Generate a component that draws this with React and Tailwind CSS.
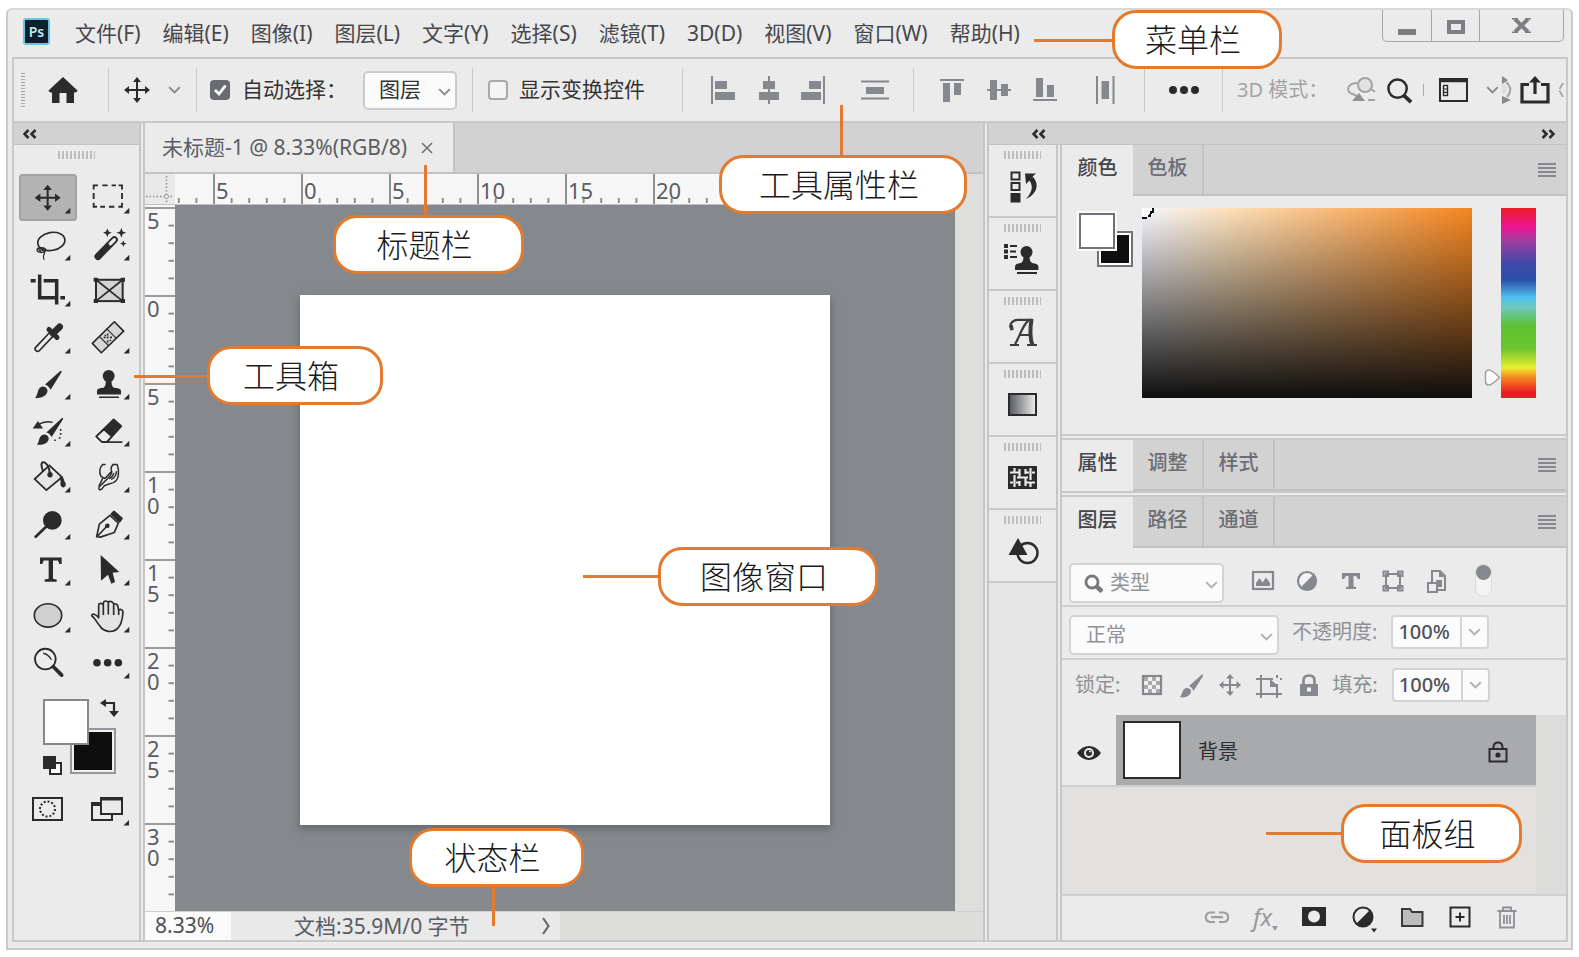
import React from "react";

const INK = "#2b2b2d";
const GREY = "#85888d";

/* ---------- shared pieces ---------- */

function Grip({ vertical }) {
  const marks = Array.from({ length: vertical ? 12 : 10 });
  return vertical ? (
    <span className="flex flex-col gap-[2px]" aria-hidden="true">
      {marks.map((_, i) => (
        <span key={i} className="h-px w-[4px] bg-[#a5a5a5]" />
      ))}
    </span>
  ) : (
    <span className="flex h-[8px] gap-[2px]" aria-hidden="true">
      {marks.map((_, i) => (
        <span key={i} className="w-[2px] bg-[#bdbdbd] last:w-px" />
      ))}
    </span>
  );
}

function Chevron({ color = "#8a8a8a", className = "" }) {
  return (
    <svg width="13" height="8" viewBox="0 0 14 9" className={className} aria-hidden="true">
      <path d="M1 1.2 L7 7.2 L13 1.2" fill="none" stroke={color} strokeWidth="2.2" />
    </svg>
  );
}

function DoubleChevron({ right }) {
  return (
    <svg width="14" height="10" viewBox="0 0 14 10" aria-hidden="true">
      <path
        d={right ? "M1.5 1 L5.5 5 L1.5 9 M8.5 1 L12.5 5 L8.5 9" : "M5.5 1 L1.5 5 L5.5 9 M12.5 1 L8.5 5 L12.5 9"}
        fill="none"
        stroke={INK}
        strokeWidth="2.6"
      />
    </svg>
  );
}

function MoveGlyph({ size = 26, color = INK }) {
  return (
    <svg width={size} height={size} viewBox="0 0 26 26" fill={color} aria-hidden="true">
      <path d="M13 0 L17 5 H14 V12 H21 V9 L26 13 L21 17 V14 H14 V21 H17 L13 26 L9 21 H12 V14 H5 V17 L0 13 L5 9 V12 H12 V5 H9 Z" />
    </svg>
  );
}

/* ---------- menu bar ---------- */

const MENUS = ["文件(F)", "编辑(E)", "图像(I)", "图层(L)", "文字(Y)", "选择(S)", "滤镜(T)", "3D(D)", "视图(V)", "窗口(W)", "帮助(H)"];

function MenuBar() {
  return (
    <header className="flex h-[47px] shrink-0 items-start pr-[4px] pl-[11px]">
      <div className="mt-[8px] flex size-[27px] items-center justify-center rounded-[3px] border-2 border-[#6cc3e4] bg-[#10202a] text-[14px] leading-none font-semibold text-[#bfe6f5]">
        Ps
      </div>
      <nav className="mt-[8px] ml-[25px] flex gap-[22px]">
        {MENUS.map((m) => (
          <button key={m} type="button" className="text-[21px] leading-[30px] whitespace-nowrap text-[#47474b]">
            {m}
          </button>
        ))}
      </nav>
      <div className="ml-auto flex h-[32px] rounded-b-[5px] border border-t-0 border-[#a6a6a8]">
        <button type="button" aria-label="最小化" className="flex w-[49px] items-center justify-center border-r border-[#a6a6a8] pt-[12px]">
          <span className="h-[6px] w-[18px] bg-[#7b7e83]" />
        </button>
        <button type="button" aria-label="最大化" className="flex w-[48px] items-center justify-center border-r border-[#a6a6a8] pt-[2px]">
          <span className="h-[14px] w-[18px] border-[4px] border-[#7b7e83]" />
        </button>
        <button type="button" aria-label="关闭" className="flex w-[83px] items-center justify-center">
          <svg width="19" height="15" viewBox="0 0 19 15" aria-hidden="true">
            <path d="M3 1 L16 14 M16 1 L3 14" stroke="#7b7e83" strokeWidth="4" />
            <path d="M0 .8 H6 M13 .8 H19 M0 14.2 H6 M13 14.2 H19" stroke="#7b7e83" strokeWidth="1.6" />
          </svg>
        </button>
      </div>
    </header>
  );
}

/* ---------- options bar ---------- */

const ALIGN = {
  left: (
    <>
      <path d="M1 0 V28" stroke={GREY} strokeWidth="2" />
      <path d="M4 5 H16 V13 H4 Z M4 16 H24 V24 H4 Z" fill={GREY} />
    </>
  ),
  center: (
    <>
      <path d="M12 0 V28" stroke={GREY} strokeWidth="2" />
      <path d="M6 5 H18 V13 H6 Z M2 16 H22 V24 H2 Z" fill={GREY} />
    </>
  ),
  right: (
    <>
      <path d="M23 0 V28" stroke={GREY} strokeWidth="2" />
      <path d="M8 5 H20 V13 H8 Z M0 16 H20 V24 H0 Z" fill={GREY} />
    </>
  ),
  distV: (
    <>
      <path d="M-2 5.5 H26 M-2 22.500 H26" stroke={GREY} strokeWidth="2" />
      <path d="M3 11 H21 V18 H3 Z" fill={GREY} />
    </>
  ),
  top: (
    <>
      <path d="M0 4 H24" stroke={GREY} strokeWidth="2" />
      <path d="M3 7 H10 V26 H3 Z M14 7 H21 V19 H14 Z" fill={GREY} />
    </>
  ),
  middle: (
    <>
      <path d="M0 14 H24" stroke={GREY} strokeWidth="2" />
      <path d="M3 4 H10 V24 H3 Z M14 8 H21 V20 H14 Z" fill={GREY} />
    </>
  ),
  bottom: (
    <>
      <path d="M0 24 H24" stroke={GREY} strokeWidth="2" />
      <path d="M3 2 H10 V21 H3 Z M14 9 H21 V21 H14 Z" fill={GREY} />
    </>
  ),
  distH: (
    <>
      <path d="M4 0 V28 M20.500 0 V28" stroke={GREY} strokeWidth="2" />
      <path d="M8.500 5 H16 V23 H8.500 Z" fill={GREY} />
    </>
  ),
};

function AlignButton({ name, label, className }) {
  return (
    <button type="button" aria-label={label} className={`flex shrink-0 justify-center ${className}`}>
      <svg width="24" height="28" viewBox="0 0 24 28" className="overflow-visible" aria-hidden="true">
        {ALIGN[name]}
      </svg>
    </button>
  );
}

function Divider() {
  return <span className="h-[44px] w-px shrink-0 bg-[#cacaca]" />;
}

function OptionsBar() {
  return (
    <div className="flex h-[64px] shrink-0 items-center overflow-hidden border-b-2 border-[#c9c9c9] pl-[7px] whitespace-nowrap text-[21px] text-[#333]">
      <Grip vertical />
      <button type="button" aria-label="主页" className="ml-[23px]">
        <svg width="30" height="28" viewBox="0 0 30 28" fill={INK} aria-hidden="true">
          <path d="M15 1 L29.500 14.500 Q29 17 26 16.500 V27 H18.500 V17 H11.500 V27 H4 V16.500 Q1 17 .5 14.500 Z" />
        </svg>
      </button>
      <span className="w-[30px] shrink-0" />
      <Divider />
      <button type="button" aria-label="移动工具" className="ml-[15px] flex items-center gap-[18px]">
        <MoveGlyph />
        <Chevron />
      </button>
      <span className="w-[15px] shrink-0" />
      <Divider />
      <label className="ml-[13px] flex items-center gap-[12px]">
        <span className="grid">
          <input type="checkbox" defaultChecked className="col-start-1 row-start-1 size-[20px] appearance-none rounded-[4px] bg-[#696c73]" />
          <svg viewBox="0 0 20 20" className="pointer-events-none col-start-1 row-start-1 size-[20px]" aria-hidden="true">
            <path d="M5 10 L9 14 L15.500 5.500" fill="none" stroke="#fff" strokeWidth="2.800" />
          </svg>
        </span>
        <span>自动选择：</span>
      </label>
      <span className="relative ml-[16px] block">
        <select aria-label="自动选择" className="h-[39px] w-[94px] appearance-none rounded-[5px] border-2 border-[#cbcbcb] bg-[#fbfbfb] pl-[14px] text-[21px]">
          <option>图层</option>
          <option>组</option>
        </select>
        <Chevron className="pointer-events-none absolute top-[17px] right-[6px]" />
      </span>
      <span className="w-[15px] shrink-0" />
      <Divider />
      <label className="ml-[15px] flex items-center gap-[11px]">
        <input type="checkbox" className="size-[20px] appearance-none rounded-[4px] border-2 border-[#a9a9a9] bg-[#f4f4f4]" />
        <span>显示变换控件</span>
      </label>
      <span className="w-[37px] shrink-0" />
      <Divider />
      <AlignButton name="left" label="左对齐" className="ml-[16px] w-[47px]" />
      <AlignButton name="center" label="水平居中对齐" className="w-[46px]" />
      <AlignButton name="right" label="右对齐" className="w-[42px]" />
      <AlignButton name="distV" label="垂直分布" className="ml-[16px] w-[50px]" />
      <span className="w-[13px] shrink-0" />
      <Divider />
      <AlignButton name="top" label="顶对齐" className="ml-[14px] w-[47px]" />
      <AlignButton name="middle" label="垂直居中对齐" className="w-[47px]" />
      <AlignButton name="bottom" label="底对齐" className="w-[46px]" />
      <AlignButton name="distH" label="水平分布" className="ml-[13px] w-[48px]" />
      <span className="w-[15px] shrink-0" />
      <Divider />
      <button type="button" aria-label="更多选项" className="flex w-[77px] shrink-0 justify-center">
        <svg width="30" height="8" viewBox="0 0 30 8" fill={INK} aria-hidden="true">
          <circle cx="4" cy="4" r="4" />
          <circle cx="15" cy="4" r="4" />
          <circle cx="26" cy="4" r="4" />
        </svg>
      </button>
      <Divider />
      <span className="ml-[14px] text-[20px] text-[#a3a3a5]">3D 模式：</span>
      <div className="ml-auto flex shrink-0 items-center">
        <button type="button" aria-label="环绕移动 3D 相机">
          <svg width="29" height="26" viewBox="0 0 29 26" fill="none" stroke="#a2a4a8" strokeWidth="2" aria-hidden="true">
            <circle cx="18" cy="8" r="7" fill="#e2e2e2" />
            <path d="M10 6 C2 6 -1 12 3 16 L10 19 M24 12 L28 15 M21 23 H28" />
            <path d="M5 24 L12 16 L18 24 Z" fill="#8d9095" stroke="none" />
          </svg>
        </button>
        <button type="button" aria-label="搜索" className="ml-[10px]">
          <svg width="27" height="27" viewBox="0 0 28 27" fill="none" stroke={INK} aria-hidden="true">
            <circle cx="12" cy="11.500" r="9.500" strokeWidth="2.600" />
            <path d="M18.500 18.500 L26 25.500" strokeWidth="4" />
          </svg>
        </button>
        <span className="ml-[10px] h-[12px] w-px bg-[#aaa]" />
        <button type="button" aria-label="选择工作区" className="ml-[15px] flex items-center gap-[18px]">
          <svg width="29" height="24" viewBox="0 0 29 24" fill="none" stroke={INK} aria-hidden="true">
            <rect x="1" y="1" width="27" height="22" strokeWidth="2" />
            <path d="M0 2.500 H29" strokeWidth="3.500" />
            <rect x="4.500" y="7.500" width="4" height="10" strokeWidth="1.400" />
            <path d="M4.500 11 H8.500 M4.500 14.300 H8.500" strokeWidth="1.200" />
          </svg>
          <Chevron />
        </button>
        <svg width="10" height="28" viewBox="0 0 10 28" className="ml-[3px]" aria-hidden="true">
          <path d="M0 0 L6 4 L0 8 Z M0 20 L9 24 L0 28 Z" fill="#85888d" />
          <path d="M0 8 H3 Q6 13 3 18 H0 Z" fill="#dedede" />
          <path d="M4 6 Q12 13 5 21" fill="none" stroke="#a2a4a8" strokeWidth="2" />
        </svg>
        <button type="button" aria-label="共享" className="ml-[8px]">
          <svg width="30" height="28" viewBox="0 0 30 28" fill="none" stroke={INK} strokeWidth="3.200" aria-hidden="true">
            <path d="M9 8.500 H2 V26 H28 V8.500 H21 M15 18 V5" />
            <path d="M15 0 L21 6.500 H9 Z" fill={INK} stroke="none" />
          </svg>
        </button>
        <svg width="6" height="16" viewBox="0 0 6 16" className="mr-[2px] ml-[8px]" aria-hidden="true">
          <path d="M5 1 L1 8 L5 15" fill="none" stroke="#a2a4a8" strokeWidth="1.800" strokeDasharray="7 2" />
        </svg>
      </div>
    </div>
  );
}

/* ---------- toolbox ---------- */

const TOOLS = [
  {
    name: "移动工具",
    art: (
      <path fill={INK} d="M86 32 L99 48 H89 V68 H108 V58 L125 71 L108 84 V74 H89 V94 H99 L86 110 L73 94 H83 V74 H64 V84 L47 71 L64 58 V68 H83 V48 H73 Z" />
    ),
  },
  {
    name: "矩形选框工具",
    art: <path fill="none" stroke={INK} strokeWidth="5.500" d="M44 46 V34 H57 M70 34 H86 M98 34 H111 M119 34 H129 V46 M129 57 V75 M129 86 V98 H118 M106 98 H90 M78 98 H64 M54 98 H44 V86 M44 75 V57" />,
  },
  {
    name: "套索工具",
    art: (
      <g fill="none" stroke={INK} strokeWidth="5">
        <ellipse cx="97" cy="61" rx="41" ry="27" transform="rotate(-10 97 61)" />
        <ellipse cx="67" cy="87" rx="13" ry="7" strokeWidth="4" />
        <path d="M60 90 C66 80 82 92 74 102 Q72 110 76 116 M56 80 L68 96" strokeWidth="3.500" />
      </g>
    ),
  },
  {
    name: "魔棒工具",
    art: (
      <g>
        <path d="M57 106 L106 56" stroke={INK} strokeWidth="21" strokeLinecap="round" />
        <path d="M94 68 L106 56" stroke="#ebebeb" strokeWidth="10" strokeLinecap="round" />
        <path fill={INK} d="M85 22 l4 9 9 4 -9 4 -4 9 -4 -9 -9 -4 9 -4z M127 20 l4 11 11 4 -11 4 -4 11 -4 -11 -11 -4 11 -4z M133 58 l3 7 7 2 -7 3 -3 7 -3 -7 -7 -3 7 -2z" />
      </g>
    ),
  },
  {
    name: "裁剪工具",
    art: <path fill="none" stroke={INK} strokeWidth="10.500" d="M62 22 V92 H112 M35 41 H50 M74 41 H113 V112 M124 92 H138" />,
  },
  {
    name: "图框工具",
    plain: true,
    art: (
      <g stroke={INK} fill="none">
        <rect x="51" y="38" width="80" height="64" fill="#d4d4d4" strokeWidth="6" />
        <path d="M51 38 L131 102 M131 38 L51 102" strokeWidth="5" />
        <path d="M44 32 h13 v12 h-13z M125 32 h13 v12 h-13z M44 96 h13 v12 h-13z M125 96 h13 v12 h-13z" fill={INK} stroke="none" />
      </g>
    ),
  },
  {
    name: "吸管工具",
    art: (
      <g>
        <path d="M56 104 L94 64" stroke={INK} strokeWidth="20" strokeLinecap="round" />
        <path d="M56 104 L94 64" stroke="#ebebeb" strokeWidth="10" strokeLinecap="round" />
        <path d="M102 58 L122 38" stroke={INK} strokeWidth="20" strokeLinecap="round" />
        <path d="M90 46 L114 70" stroke={INK} strokeWidth="15" strokeLinecap="round" />
      </g>
    ),
  },
  {
    name: "污点修复画笔工具",
    art: (
      <g stroke={INK} fill="none" strokeLinejoin="round">
        <path d="M106 23 L134 51 L67 116 L40 88 Z" fill="#d8d8d8" strokeWidth="5" />
        <path d="M84 45 L112 73 M61 67 L89 95" strokeWidth="3.500" />
        <path d="M86 58 v6 M74 70 h6 M86 67 v6 M93 70 h6 M86 79 v6 M79 62 v4 M94 77 v4" strokeWidth="5" />
      </g>
    ),
  },
  {
    name: "画笔工具",
    art: (
      <g fill={INK}>
        <path d="M48 114 C58 104 54 82 70 79 C82 78 89 90 84 99 C77 112 60 115 48 114 Z" />
        <path d="M78 73 L124 33 Q130 29 127 37 L95 89 Q88 76 78 73 Z" />
      </g>
    ),
  },
  {
    name: "仿制图章工具",
    art: (
      <g fill={INK}>
        <circle cx="89" cy="48" r="18" />
        <path d="M80 60 H98 Q96 76 104 83 Q126 84 126 92 V103 H54 V92 Q54 84 74 83 Q82 76 80 60 Z M60 109 H120 V114 H60 Z" />
      </g>
    ),
  },
  {
    name: "历史记录画笔工具",
    art: (
      <g fill={INK}>
        <path d="M54 113 C62 104 58 86 74 82 C86 81 92 92 88 100 C81 112 64 114 54 113 Z" />
        <path d="M82 76 L127 34 Q135 29 131 38 L98 90 Q92 78 82 76 Z" />
        <path d="M41 64 L57 42 L72 64 Z" />
        <path d="M58 52 Q80 40 101 46" fill="none" stroke={INK} strokeWidth="4" />
        <path d="M125 66 v5 M125 78 v5 M122 90 v5 M108 97 v5" stroke={INK} strokeWidth="5" />
      </g>
    ),
  },
  {
    name: "橡皮擦工具",
    art: (
      <g stroke={INK} strokeWidth="5" strokeLinejoin="round">
        <path d="M104 37 L127 57 L85 104 H68 L52 88 Z" fill={INK} />
        <path d="M75 67 L98 88 L84 104 H68 L52 88 Z" fill="#ededed" />
        <path d="M70 105 H130" />
      </g>
    ),
  },
  {
    name: "油漆桶工具",
    art: (
      <g fill="none" stroke={INK} strokeWidth="5.500">
        <path d="M91 37 L129 72 L82 111 L47 78 Z" fill="#e6e6e6" />
        <path d="M93 64 C92 40 80 24 70 28 C62 34 72 48 72 56" strokeWidth="6" />
        <circle cx="93" cy="65" r="8" fill={INK} stroke="none" />
        <path d="M122 72 Q132 66 136 84 Q146 98 134 103 Q121 102 125 86 Z" fill={INK} stroke="none" />
      </g>
    ),
  },
  {
    name: "涂抹工具",
    art: (
      <g fill="none" stroke={INK} strokeWidth="4.500" strokeLinecap="round" strokeLinejoin="round">
        <path d="M78 34 H71 C61 44 60 60 66 70 L77 76 C86 70 90 60 98 56 C100 62 94 68 86 76 L66 96 C58 100 58 110 64 110 C70 110 72 102 76 98 L92 92 C108 90 118 78 118 66 C119 52 118 42 114 34 H102" />
        <path d="M98 56 C94 46 98 38 104 34 M112 56 C112 66 106 74 98 78 M104 62 C102 68 98 72 92 76 M71 76 L60 98" />
      </g>
    ),
  },
  {
    name: "减淡工具",
    art: (
      <g>
        <circle cx="100" cy="61" r="28" fill={INK} />
        <path d="M82 79 L50 110" stroke={INK} strokeWidth="8" strokeLinecap="round" />
      </g>
    ),
  },
  {
    name: "钢笔工具",
    art: (
      <g fill="none" stroke={INK} strokeWidth="5" strokeLinejoin="round">
        <path d="M53 110 L61 72 L93 46 L118 69 L106 97 L64 111 Z" fill="#ececec" />
        <path d="M54 110 L82 80" />
        <circle cx="85" cy="77" r="7" fill={INK} stroke="none" />
        <path d="M97 42 L105 34 L129 55 L122 65 Z" fill={INK} />
      </g>
    ),
  },
  {
    name: "横排文字工具",
    art: <path fill={INK} d="M63 34 H128 V54 H121 L117 43 H102 V98 L113 100 V107 H77 V100 L89 98 V43 H74 L70 54 H63 Z" />,
  },
  {
    name: "路径选择工具",
    art: <path fill={INK} d="M65 27 L121 78 L101 80 L108 108 L97 113 L87 86 L66 104 Z" />,
  },
  {
    name: "椭圆工具",
    art: <ellipse cx="87" cy="67" rx="41" ry="35" fill="#d0d0d0" stroke={INK} strokeWidth="5" />,
  },
  {
    name: "抓手工具",
    art: (
      <path
        fill="#e4e4e4"
        stroke={INK}
        strokeWidth="5"
        strokeLinejoin="round"
        d="M62 98 C50 84 48 74 38 68 C38 60 50 62 59 74 L59 36 C60 29 69 29 73 36 V30 C74 22 84 22 88 28 C92 23 101 24 104 33 C109 30 117 34 117 42 L119 52 C124 46 132 50 132 58 C130 84 126 96 116 106 C102 120 74 118 62 98 Z M73 66 V36 M88 64 V30 M104 66 V34 M119 66 V50"
      />
    ),
  },
  {
    name: "缩放工具",
    plain: true,
    art: (
      <g fill="none" stroke={INK}>
        <circle cx="79" cy="60" r="31" strokeWidth="5.500" fill="#ededed" />
        <path d="M72 42 Q92 44 97 62 Q88 48 72 42" strokeWidth="3" />
        <path d="M103 83 L128 108" strokeWidth="11" strokeLinecap="round" />
      </g>
    ),
  },
  {
    name: "编辑工具栏",
    art: (
      <g fill={INK}>
        <circle cx="54" cy="71" r="11.500" />
        <circle cx="86" cy="71" r="11.500" />
        <circle cx="118" cy="71" r="11.500" />
      </g>
    ),
  },
];

function Toolbox() {
  return (
    <aside className="flex w-[127px] shrink-0 flex-col border-r-2 border-[#c6c6c6]">
      <div className="flex h-[22px] shrink-0 items-center border-b border-[#c2c2c2] bg-[#d2d2d2] pl-[9px]">
        <DoubleChevron />
      </div>
      <div className="flex h-[29px] shrink-0 justify-center pt-[6px]">
        <Grip />
      </div>
      <div className="grid h-[512px] shrink-0 auto-rows-fr grid-cols-[58px_58px] gap-x-[2px] pl-[5px]">
        {TOOLS.map((t, i) => (
          <button key={t.name} type="button" aria-label={t.name} className={i === 0 ? "rounded-[4px] bg-[#b3b3b3] shadow-[inset_0_0_0_2px_#a2a2a2]" : ""}>
            <svg viewBox="0 0 174 139" className="h-full w-full" aria-hidden="true">
              {t.art}
              {!t.plain && <path d={i % 2 ? "M151 101 V118 H134 Z" : "M154 101 V118 H137 Z"} fill={INK} />}
            </svg>
          </button>
        ))}
      </div>
      <div className="relative mt-[12px] ml-[28px] h-[80px] w-[90px] shrink-0">
        <button type="button" aria-label="背景色" className="absolute top-[30px] left-[28px] size-[46px] border-2 border-[#94979c] bg-[#0e0e0e] shadow-[inset_0_0_0_2px_#f0f0f0]" />
        <button type="button" aria-label="前景色" className="absolute top-[1px] left-[1px] size-[46px] border-2 border-[#85888d] bg-white" />
        <svg width="19" height="18" viewBox="0 0 19 18" className="absolute top-[1px] left-[58px]" aria-hidden="true">
          <path d="M5 4 H14 V12" fill="none" stroke={INK} strokeWidth="2.200" />
          <path d="M0 4 L6 0 V8 Z M9 12 H19 L14 18 Z" fill={INK} />
        </svg>
        <svg width="19" height="19" viewBox="0 0 19 19" className="absolute top-[58px] left-[1px]" aria-hidden="true">
          <rect x="7" y="7" width="11" height="11" fill="#fff" stroke={INK} strokeWidth="2" />
          <rect width="13" height="13" fill={INK} />
        </svg>
      </div>
      <div className="mt-[18px] flex shrink-0 gap-[28px] pl-[18px]">
        <button type="button" aria-label="以快速蒙版模式编辑">
          <svg width="31" height="30" viewBox="0 0 31 30" fill="none" stroke={INK} aria-hidden="true">
            <rect x="1" y="2" width="29" height="22" strokeWidth="2" />
            <circle cx="15.500" cy="13" r="7.500" strokeWidth="2" strokeDasharray="2 1.900" />
          </svg>
        </button>
        <button type="button" aria-label="更改屏幕模式">
          <svg width="38" height="30" viewBox="0 0 38 30" fill="#ebebeb" stroke={INK} strokeWidth="2" aria-hidden="true">
            <rect x="1" y="7" width="20" height="17" />
            <path d="M1 8 H12" strokeWidth="4" />
            <rect x="10" y="2" width="21" height="16" />
            <path d="M10 3 H31" strokeWidth="3" />
            <path d="M38 24 V29.500 H32.500 Z" fill={INK} stroke="none" />
          </svg>
        </button>
      </div>
    </aside>
  );
}

/* ---------- document window ---------- */

const H_LABELS = ["5", "0", "5", "10", "15", "20", "", "", ""];
const V_LABELS = ["5", "0", "5", "10", "15", "20", "25", "30"];
const STEPS = [17.6, 35.2, 52.8, 70.4];

function HSegment({ label }) {
  return (
    <div className="relative h-full w-[88px] shrink-0 border-l-2 border-[#8f9093] pl-px text-[22px] leading-[32px] text-[#5a5c66]">
      {label}
      <svg width="88" height="29" viewBox="0 0 88 29" className="absolute top-0 left-[-2px]" aria-hidden="true">
        {STEPS.map((x) => (
          <path key={x} d={`M${x + 1} 24 V29`} stroke="#8f9093" strokeWidth="2" />
        ))}
      </svg>
    </div>
  );
}

function VSegment({ label }) {
  return (
    <div className="relative flex h-[88px] shrink-0 flex-col border-t-2 border-[#9a9b9e] pt-px pl-[2px] text-[22px] leading-[21px] text-[#5a5c66]">
      {label.split("").map((c, i) => (
        <span key={i}>{c}</span>
      ))}
      <svg width="30" height="88" viewBox="0 0 30 88" className="absolute top-[-2px] left-0" aria-hidden="true">
        {STEPS.map((y) => (
          <path key={y} d={`M23.500 ${y + 1} H29`} stroke="#8f9093" strokeWidth="2" />
        ))}
      </svg>
    </div>
  );
}

function DocumentWindow() {
  return (
    <section className="flex min-w-0 flex-1 flex-col border-x-2 border-[#c6c6c6]">
      <div className="flex h-[51px] shrink-0 border-b-2 border-[#c2c2c2] bg-[#d2d2d2]">
        <div className="flex h-[49px] w-[310px] items-center gap-[14px] border-r-2 border-[#c2c2c2] bg-[#ebebeb] pl-[17px] text-[21px] whitespace-nowrap text-[#5c5d62]">
          <span>未标题-1 @ 8.33%(RGB/8)</span>
          <button type="button" aria-label="关闭文档">
            <svg width="12" height="12" viewBox="0 0 12 12" aria-hidden="true">
              <path d="M1 1 L11 11 M11 1 L1 11" stroke="#6f7176" strokeWidth="1.600" />
            </svg>
          </button>
        </div>
      </div>
      <div className="flex min-h-0 flex-1">
        <div className="flex min-w-0 flex-1 flex-col">
          <div className="flex h-[31px] shrink-0 border-b border-[#c2c2c2] bg-[#f7f7f7]">
            <svg width="30" height="30" viewBox="0 0 30 30" className="shrink-0 bg-[#e9e9e9]" aria-hidden="true">
              <path d="M21.500 2 V30 M1 22.500 H29" stroke="#8f9093" strokeWidth="1.500" strokeDasharray="1.500 2" />
              <circle cx="21.500" cy="22.500" r="2" fill="#fff" stroke="#8f9093" />
            </svg>
            <div className="flex min-w-0 flex-1 overflow-hidden">
              <div className="flex w-[38px] shrink-0 justify-end overflow-hidden">
                <HSegment label="" />
              </div>
              {H_LABELS.map((l, i) => (
                <HSegment key={i} label={l} />
              ))}
            </div>
          </div>
          <div className="flex min-h-0 flex-1">
            <div className="w-[30px] shrink-0 overflow-hidden bg-[#f7f7f7] pt-[2px]">
              {V_LABELS.map((l, i) => (
                <VSegment key={i} label={l} />
              ))}
            </div>
            <div className="min-w-0 flex-1 overflow-hidden bg-[#85888c] pt-[90px] pl-[125px]">
              <div className="size-[530px] bg-white shadow-[0_4px_8px_1px_#686b75]" />
            </div>
          </div>
        </div>
        <div className="w-[28px] shrink-0 bg-[#dededd]" />
      </div>
      <footer className="flex h-[29px] shrink-0 border-t border-[#cfcfcf] bg-[#dddddc] text-[21px] leading-[27px] whitespace-nowrap text-[#5a5c66]">
        <span className="w-[86px] bg-[#fafafa] pl-[10px] text-[#4e4f55]">8.33%</span>
        <span className="flex w-[329px] items-center justify-between bg-[#e9e9e9] pr-[10px] pl-[63px]">
          文档:35.9M/0 字节
          <svg width="8" height="18" viewBox="0 0 8 18" aria-hidden="true">
            <path d="M1 1 L6.500 9 L1 17" fill="none" stroke="#6a6b70" strokeWidth="2.200" />
          </svg>
        </span>
      </footer>
    </section>
  );
}

/* ---------- collapsed dock ---------- */

const DOCK = [
  {
    name: "历史记录",
    art: (
      <g>
        <path d="M7.500 5.500 h8 v7 h-8z M7.500 16 h8 v7 h-8z" fill="none" stroke={INK} strokeWidth="2" />
        <path d="M6.500 26 h10 v9.500 h-10z" fill={INK} />
        <path d="M21 6.500 H32 L28.500 9.500 C36 17 33 27 22 32 C29 24 29 19 25.500 13.500 L22 17 Z" fill={INK} />
      </g>
    ),
  },
  {
    name: "仿制源",
    art: (
      <g fill={INK}>
        <path d="M0 4 h4 v4 h-4z M0 9.500 h4 v4 h-4z M0 15 h4 v4 h-4z M6 5 h7 v2 h-7z M6 10.500 h6 v2 h-6z M6 16 h7 v2 h-7z" />
        <circle cx="22.500" cy="12" r="6" />
        <path d="M19.500 16 H25.500 Q25 21 28 23 Q34.500 23.500 34.500 27 V30 H11 V27 Q11 23.500 17 23 Q20 21 19.500 16 Z M13 32 H33 V34 H13 Z" />
      </g>
    ),
  },
  {
    name: "字形",
    art: (
      <g fill="none" stroke="#3c3c3f">
        <path d="M8 17 C4 12 8 7 14 6.800 H29 M25 7 C18 12 15 26 11 31 M16 22 H27" strokeWidth="2.200" />
        <path d="M6 32 H15 M23 32 H33" strokeWidth="2" />
        <path d="M27.500 6 C26 16 26 26 28.500 32" strokeWidth="4" />
        <path d="M8 17 L7 12" strokeWidth="3.500" />
      </g>
    ),
  },
  {
    name: "渐变",
    art: (
      <g>
        <defs>
          <linearGradient id="dock-gradient">
            <stop offset="0" stopColor="#55585f" />
            <stop offset="1" stopColor="#efefef" />
          </linearGradient>
        </defs>
        <rect x="5" y="8" width="27" height="21" fill="url(#dock-gradient)" stroke={INK} strokeWidth="2" />
      </g>
    ),
  },
  {
    name: "图案",
    art: (
      <g>
        <rect x="4" y="7" width="29" height="23" fill={INK} />
        <path d="M6 13.500 H15 M22 13.500 H25 M28 13.500 H31 M6 23.500 H9 M12 23.500 H15 M22 23.500 H31 M10.500 9 V13 M10.500 16 V28 M26.500 9 V21 M26.500 24 V28 M15.500 10 V19 M15.500 22 V27 M21.500 10 V15 M21.500 18 V27 M13 18.500 H24" fill="none" stroke="#ececec" strokeWidth="2.200" />
      </g>
    ),
  },
  {
    name: "形状",
    art: (
      <g>
        <circle cx="23.500" cy="21" r="10" fill="none" stroke={INK} strokeWidth="2.400" />
        <path d="M4.500 23 L14 6 L23.500 23 Z" fill={INK} />
      </g>
    ),
  },
];

function Dock() {
  return (
    <aside className="flex w-[69px] shrink-0 flex-col border-r-2 border-[#c6c6c6] bg-[#ebebeb]">
      {DOCK.map((d) => (
        <div key={d.name} className="flex flex-col items-center border-b-2 border-[#c9c9c9] pt-[6px]">
          <Grip />
          <button type="button" aria-label={d.name} className="mt-[8px] h-[49px] pb-[9px]">
            <svg width="37" height="40" viewBox="0 0 37 40" aria-hidden="true">
              {d.art}
            </svg>
          </button>
        </div>
      ))}
      <div className="flex-1 bg-[#e6e6e6]" />
    </aside>
  );
}

/* ---------- right panels ---------- */

function PanelTabs({ tabs }) {
  return (
    <div className="flex h-[51px] shrink-0 bg-[#d2d2d2]" role="tablist">
      {tabs.map((t, i) => (
        <button
          key={t}
          type="button"
          role="tab"
          aria-selected={i === 0}
          className={
            i === 0
              ? "w-[71px] bg-[#ebebeb] pb-[5px] text-center text-[20px] font-medium text-[#44454a]"
              : "w-[71px] border-r-2 border-b-2 border-[#c2c2c2] pb-[3px] text-center text-[20px] font-medium text-[#6c6e74]"
          }
        >
          {t}
        </button>
      ))}
      <div className="flex flex-1 items-center justify-end border-b-2 border-[#c2c2c2] pr-[10px]">
        <button type="button" aria-label="面板菜单" className="flex flex-col gap-[2px]">
          <span className="h-[2px] w-[18px] bg-[#85888d]" />
          <span className="h-[2px] w-[18px] bg-[#85888d]" />
          <span className="h-[2px] w-[18px] bg-[#85888d]" />
          <span className="h-[2px] w-[18px] bg-[#85888d]" />
        </button>
      </div>
    </div>
  );
}

function ColorPanel() {
  return (
    <section className="mb-[2px] flex h-[291px] shrink-0 flex-col border-b-2 border-[#c9c9c9]">
      <PanelTabs tabs={["颜色", "色板"]} />
      <div className="flex pt-[12px] pl-[15px]">
        <div className="relative mt-[3px] size-[58px]">
          <span className="absolute top-[20px] left-[20px] size-[36px] border-2 border-[#6f7278] bg-[#0e0e0e] shadow-[inset_0_0_0_2px_#fff]" />
          <span className="absolute top-[2px] left-[2px] size-[36px] border-2 border-[#6f7278] bg-white shadow-[0_0_0_2px_#fafafa]" />
        </div>
        <div className="ml-[7px] h-[190px] flex-1 bg-[linear-gradient(to_bottom,transparent,#0e0e0e),linear-gradient(to_right,#f6f8ff,#fde2bd_25%,#f5861f)]">
          <svg width="12" height="12" viewBox="0 0 12 12" aria-hidden="true">
            <path d="M0 0 H10 V3 L4 9 H0 Z" fill="#fff" />
            <path d="M11 0 V4 H9 V6 M8 6 V8 H6 M5 10 H0" fill="none" stroke="#111" strokeWidth="2" />
          </svg>
        </div>
        <div className="flex w-[94px] items-start pr-[30px]">
          <svg width="17" height="17" viewBox="0 0 17 17" className="mt-[161px] ml-[12px]" aria-hidden="true">
            <path d="M1.500 4 Q2 1 5 1 Q8 1 15.500 8.500 Q8 16 5 16 Q2 16 1.500 13 Z" fill="#fff" stroke="#a5a5a5" strokeWidth="1.600" />
          </svg>
          <div className="h-[190px] flex-1 bg-[linear-gradient(to_bottom,#ed1c24,#ec1492_10%,#a03da0_17%,#3c4aa8_30%,#2c4fa9_38%,#4fc0f0_47%,#6cc9c0_52%,#5cc233_62%,#6cc52e_74%,#e9ee2f_84%,#f58a20_89%,#ed1c24_97%)]" />
        </div>
      </div>
    </section>
  );
}

function ValueField({ id, label, pad }) {
  return (
    <div className={`flex items-center ${pad}`}>
      <label htmlFor={id} className="text-[#8e9094]">{label}</label>
      <div className="ml-[14px] flex h-[34px] rounded-[4px] border-2 border-[#d3d3d3] bg-[#fbfbfb]">
        <input id={id} defaultValue="100%" className="w-[67px] bg-transparent pl-[5px] text-[20px] font-medium text-[#50525c] outline-none" />
        <button type="button" aria-label="展开滑块" className="flex w-[27px] items-center justify-center border-l-2 border-[#d3d3d3]">
          <Chevron color="#b0b0b0" />
        </button>
      </div>
    </div>
  );
}

function IconButton({ label, className, size = 26, children }) {
  return (
    <button type="button" aria-label={label} className={`flex shrink-0 items-center justify-center ${className}`}>
      <svg width={size} height={size} viewBox="0 0 26 26" className="overflow-visible" aria-hidden="true">
        {children}
      </svg>
    </button>
  );
}

function LayersPanel() {
  return (
    <section className="flex flex-1 flex-col border-t-2 border-[#c9c9c9] text-[20px]">
      <PanelTabs tabs={["图层", "路径", "通道"]} />

      <div className="flex h-[59px] shrink-0 items-end border-b-2 border-[#cfcfcf] pb-[2px] pl-[7px]">
        <div className="relative">
          <select aria-label="图层过滤类型" className="h-[40px] w-[155px] appearance-none rounded-[5px] border-2 border-[#d3d3d3] bg-[#fbfbfb] pl-[39px] text-[#909296]">
            <option>类型</option>
          </select>
          <svg width="19" height="19" viewBox="0 0 19 19" className="pointer-events-none absolute top-[11px] left-[15px]" fill="none" stroke="#77797e" aria-hidden="true">
            <circle cx="8" cy="8" r="6" strokeWidth="2.800" />
            <path d="M12.500 12.500 L18 17.500" strokeWidth="4.500" />
          </svg>
          <Chevron color="#b0b0b0" className="pointer-events-none absolute top-[18px] right-[6px]" />
        </div>
        <div className="ml-[17px] flex h-[44px]">
          <IconButton label="像素图层滤镜" className="w-[44px]">
            <rect x="3" y="4" width="20" height="17" fill="none" stroke={GREY} strokeWidth="2.200" />
            <path d="M6 18 L6 15 L9.500 10 L12.500 14.500 L16 9.500 L20 15 V18 Z" fill={GREY} />
          </IconButton>
          <IconButton label="调整图层滤镜" className="w-[44px]">
            <circle cx="13" cy="13" r="9" fill="#f2f2f2" stroke={GREY} strokeWidth="2.200" />
            <path d="M19.500 6.500 A9.200 9.200 0 0 1 6.500 19.500 Z" fill={GREY} />
          </IconButton>
          <IconButton label="文字图层滤镜" className="w-[43px]">
            <path d="M4 5 H22 V11 H20 L18 8 H15.500 V18.500 L18 19 V21 H8 V19 L10.500 18.500 V8 H8 L6 11 H4 Z" fill={GREY} />
          </IconButton>
          <IconButton label="形状图层滤镜" className="w-[42px]">
            <path d="M6 6 H20 V20 H6 Z M3.500 3.500 h4.500 v4.500 h-4.500z M18 3.500 h4.500 v4.500 h-4.500z M3.500 18 h4.500 v4.500 h-4.500z M18 18 h4.500 v4.500 h-4.500z" fill="#ececec" stroke={GREY} strokeWidth="2" />
          </IconButton>
          <IconButton label="智能对象滤镜" className="w-[45px]">
            <path d="M8 14 V3 H16 L21 8 V22 H14" fill="none" stroke={GREY} strokeWidth="2" />
            <path d="M15 3 V9 H21 M12 12 H18 V19 H14 Z" fill={GREY} />
            <rect x="4" y="15" width="9" height="9" fill="#ececec" stroke={GREY} strokeWidth="2" />
          </IconButton>
        </div>
        <button type="button" role="switch" aria-checked="true" aria-label="打开图层过滤" className="mb-[6px] ml-[16px] flex h-[33px] w-[17px] items-start justify-center rounded-full border border-[#dadada] bg-[#f3f3f3]">
          <span className="block size-[15px] shrink-0 rounded-full bg-[#85888d]" />
        </button>
      </div>

      <div className="flex h-[53px] shrink-0 items-start border-b-2 border-[#cfcfcf] pt-[8px] pl-[7px]">
        <div className="relative">
          <select aria-label="混合模式" className="h-[40px] w-[210px] appearance-none rounded-[5px] border-2 border-[#d3d3d3] bg-[#fbfbfb] pl-[15px] text-[#909296]">
            <option>正常</option>
          </select>
          <Chevron color="#b0b0b0" className="pointer-events-none absolute top-[18px] right-[6px]" />
        </div>
        <ValueField id="opacity" label="不透明度:" pad="ml-[13px]" />
      </div>

      <div className="flex h-[55px] shrink-0 items-center pb-[5px] pl-[13px]">
        <span className="text-[#8e9094]">锁定:</span>
        <div className="ml-[12px] flex">
          <IconButton label="锁定透明像素" className="w-[39px]">
            <rect x="4" y="4" width="18" height="18" fill="#f3f3f3" stroke={GREY} strokeWidth="2.200" />
            <path d="M5 5 h4 v4 h-4z M13 5 h4 v4 h-4z M9 9 h4 v4 h-4z M17 9 h4 v4 h-4z M5 13 h4 v4 h-4z M13 13 h4 v4 h-4z M9 17 h4 v4 h-4z M17 17 h4 v4 h-4z" fill="#a7a9ad" />
          </IconButton>
          <IconButton label="锁定图像像素" className="w-[39px]">
            <path d="M2 25 C5 22 4 16 9 16 C13 16 14 20 12 22 C10 25 5 26 2 25 Z M11 14 L24 2.500 Q26 2 25 4 L15.500 19 Q14 15 11 14 Z" fill={GREY} />
          </IconButton>
          <IconButton label="锁定位置" className="w-[39px]">
            <path d="M13 2 L17 6.500 H14 V12 H19.500 V9 L24 13 L19.500 17 V14 H14 V19.500 H17 L13 24 L9 19.500 H12 V14 H6.500 V17 L2 13 L6.500 9 V12 H12 V6.500 H9 Z" fill={GREY} />
          </IconButton>
          <IconButton label="防止在画板内外自动嵌套" className="w-[40px]">
            <path d="M0 7 H17 M5 3 V26 M0 22 H26 M21 12 V26 M21 3 V6 M24 7 H26" fill="none" stroke={GREY} strokeWidth="2" />
            <path d="M14 7 L21 13 V15 H14 Z" fill={GREY} />
          </IconButton>
          <IconButton label="锁定全部" className="w-[40px]">
            <path d="M4 12 H22 V24 H4 Z" fill={GREY} />
            <path d="M7.500 12 V8.500 Q7.500 3.500 13 3.500 Q18.500 3.500 18.500 8.500 V12" fill="none" stroke={GREY} strokeWidth="2.600" />
            <rect x="11" y="15.500" width="4" height="4" fill="#f3f3f3" />
          </IconButton>
        </div>
        <ValueField id="fill" label="填充:" pad="ml-[3px]" />
      </div>

      <div className="flex min-h-0 flex-1">
        <div className="flex min-w-0 flex-1 flex-col bg-[#e2e1e0]">
          <div className="flex h-[72px] shrink-0 border-b-2 border-[#cfcfcf]">
            <button type="button" aria-label="切换图层可见性" className="flex w-[54px] items-center justify-center bg-[#ebebeb] pt-[6px]">
              <svg width="24" height="16" viewBox="0 0 24 16" aria-hidden="true">
                <path d="M0 8 Q5 1 12 1 Q19 1 24 8 Q19 15 12 15 Q5 15 0 8 Z" fill={INK} />
                <circle cx="12" cy="8" r="5" fill="#ebebeb" />
                <circle cx="12" cy="8" r="3" fill={INK} />
                <circle cx="13" cy="6.500" r="1" fill="#ebebeb" />
              </svg>
            </button>
            <div className="flex flex-1 items-center bg-[#a9aaac] pr-[28px] pl-[7px]">
              <span className="size-[58px] border-2 border-[#2b2b2d] bg-white" />
              <span className="ml-[17px] pt-[4px] text-[#2f2f31]">背景</span>
              <svg width="20" height="22" viewBox="0 0 20 22" className="mt-[4px] ml-auto" fill="none" stroke={INK} strokeWidth="2" aria-hidden="true">
                <rect x="1.500" y="8" width="17" height="12.500" />
                <path d="M5.500 8 V5.500 Q6 1.500 10 1.500 Q14 1.500 14.500 5.500 V8" />
                <circle cx="10" cy="14" r="2.600" fill={INK} stroke="none" />
              </svg>
            </div>
          </div>
        </div>
        <div className="w-[30px] shrink-0 bg-[#dcdcdb]" />
      </div>

      <div className="flex h-[46px] shrink-0 items-center justify-end border-t-2 border-[#cfcfcf] pr-[36px] pb-[2px]">
        <IconButton label="链接图层" className="w-[49px]">
          <path d="M11 8.500 H6 A4.800 4.800 0 0 0 6 18 H11 M15 8.500 H20 A4.800 4.800 0 0 1 20 18 H15 M7 13.200 H19" fill="none" stroke="#9c9ea2" strokeWidth="2.200" />
        </IconButton>
        <button type="button" aria-label="添加图层样式" className="flex w-[49px] items-end justify-center text-[24px] leading-[28px] text-[#97999e] italic">
          fx
          <svg width="6" height="5" viewBox="0 0 6 5" aria-hidden="true">
            <path d="M0 0 H6 L3 5 Z" fill="#97999e" />
          </svg>
        </button>
        <IconButton label="添加图层蒙版" className="w-[48px]">
          <rect x="1" y="3" width="24" height="19" fill={INK} />
          <circle cx="13" cy="12.500" r="6" fill="#ebebeb" />
        </IconButton>
        <IconButton label="创建新的填充或调整图层" className="w-[49px]">
          <circle cx="13" cy="13" r="9.500" fill="#ebebeb" stroke={INK} strokeWidth="2" />
          <path d="M20 6 A9.800 9.800 0 0 1 6 20 Z" fill={INK} />
          <path d="M21 24.500 H27 L24 28.500 Z" fill={INK} />
        </IconButton>
        <IconButton label="创建新组" className="w-[49px]">
          <path d="M3 5 H11 L13 8 H23.500 V22 H3 Z" fill="#bdbdbd" stroke="#3a3a3c" strokeWidth="2" />
        </IconButton>
        <IconButton label="创建新图层" className="w-[47px]">
          <path d="M3.500 3.500 H22.500 V22.500 H3.500 Z M13 8.500 V17.500 M8.500 13 H17.500" fill="none" stroke={INK} strokeWidth="2" />
        </IconButton>
        <IconButton label="删除图层" className="w-[47px]">
          <path d="M3.500 7 H22.500 M9 7 V3.500 H17 V7 M6 7 V23.500 H20 V7 M10 11 V20 M13 11 V20 M16 11 V20" fill="none" stroke="#8f9196" strokeWidth="1.800" />
        </IconButton>
      </div>
    </section>
  );
}

function RightSide() {
  return (
    <div className="ml-[2px] flex w-[579px] shrink-0 flex-col border-l-2 border-[#c6c6c6]">
      <div className="flex h-[22px] shrink-0 items-center border-b border-[#c2c2c2] bg-[#d2d2d2] pr-[11px] pl-[43px]">
        <DoubleChevron />
        <span className="ml-auto flex">
          <DoubleChevron right />
        </span>
      </div>
      <div className="flex min-h-0 flex-1">
        <Dock />
        <div className="ml-[2px] flex min-w-0 flex-1 flex-col border-l-2 border-[#c6c6c6]">
          <ColorPanel />
          <section className="mb-[2px] shrink-0 border-y-2 border-[#c9c9c9]">
            <PanelTabs tabs={["属性", "调整", "样式"]} />
          </section>
          <LayersPanel />
        </div>
      </div>
    </div>
  );
}

/* ---------- labels pointing at the regions ---------- */

const CALLOUTS = [
  { text: "菜单栏", box: "top-[10px] left-[1112px] w-[170px]", line: "top-[39px] left-[1034px] h-[3px] w-[79px]" },
  { text: "工具属性栏", box: "top-[155px] left-[719px] w-[248px]", line: "top-[105px] left-[840px] h-[51px] w-[3px]" },
  { text: "标题栏", box: "top-[215px] left-[333px] w-[191px]", line: "top-[165px] left-[424px] h-[51px] w-[3px]" },
  { text: "工具箱", box: "top-[346px] left-[207px] w-[176px]", line: "top-[375px] left-[134px] h-[3px] w-[74px]" },
  { text: "图像窗口", box: "top-[547px] left-[658px] w-[220px]", line: "top-[575px] left-[583px] h-[3px] w-[76px]" },
  { text: "状态栏", box: "top-[828px] left-[409px] w-[175px]", line: "top-[886px] left-[492px] h-[40px] w-[3px]" },
  { text: "面板组", box: "top-[804px] left-[1341px] w-[181px]", line: "top-[832px] left-[1266px] h-[3px] w-[76px]" },
];

function Callouts() {
  return CALLOUTS.map((c) => (
    <React.Fragment key={c.text}>
      <span className={`absolute bg-[#e37a2e] ${c.line}`} />
      <div
        className={`absolute flex h-[59px] items-center justify-center rounded-[24px] border-[3px] border-[#e37a2e] bg-white pr-[8px] pb-[4px] font-['KaiTi','STKaiti','Noto_Sans_CJK_SC',serif] text-[32px] leading-none font-light whitespace-nowrap text-[#1a1a1a] ${c.box}`}
      >
        {c.text}
      </div>
    </React.Fragment>
  ));
}

export default function App() {
  return (
    <div className="relative flex min-h-screen flex-col overflow-hidden bg-white pt-[8px] pr-[6px] pb-[7px] pl-[6px] font-['Noto_Sans','Noto_Sans_CJK_SC',sans-serif]">
      <div className="flex flex-1 flex-col rounded-t-[6px] border-2 border-[#c9c9c9] border-t-[#d8d8d8] bg-[#ebebeb] pr-[3px] pb-[6px] pl-[4px]">
        <MenuBar />
        <main className="flex min-h-0 flex-1 flex-col border-2 border-[#c9c9c9]">
          <OptionsBar />
          <div className="flex min-h-0 flex-1">
            <Toolbox />
            <span className="w-[2px] shrink-0" />
            <DocumentWindow />
            <RightSide />
          </div>
        </main>
      </div>
      <Callouts />
    </div>
  );
}
